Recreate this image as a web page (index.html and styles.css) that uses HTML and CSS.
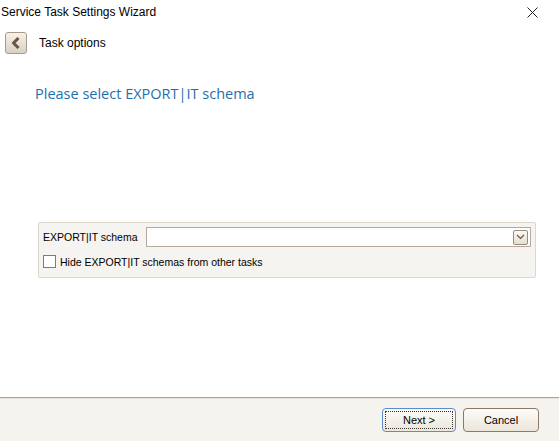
FILE: index.html
```html
<!DOCTYPE html>
<html lang="en">
<head>
  <meta charset="UTF-8" />
  <title>Service Task Settings Wizard</title>
  <link rel="stylesheet" href="styles.css">
</head>
<body>
  <div class="window">
    <div class="titlebar">
      <span class="title">Service Task Settings Wizard</span>
      <svg class="close" width="11" height="11" viewBox="0 0 11 11"><path d="M0.5 0.5 L10.5 10.5 M10.5 0.5 L0.5 10.5" stroke="#222" stroke-width="1"/></svg>
    </div>
    <div class="header">
      <button class="back" type="button">
        <svg width="10" height="12" viewBox="0 0 10 12"><path d="M7.5 1 L2.5 6 L7.5 11" fill="none" stroke="#6b5440" stroke-width="3" stroke-linejoin="round"/></svg>
      </button>
      <span class="step">Task options</span>
    </div>
    <div class="content">
      <h1 class="prompt">Please select EXPORT|IT schema</h1>
      <div class="group">
        <div class="row">
          <label class="label">EXPORT|IT schema</label>
          <div class="combo">
            <span class="drop">
              <svg width="9" height="6" viewBox="0 0 9 6"><path d="M1 1 L4.5 4.5 L8 1" fill="none" stroke="#6b5440" stroke-width="1.2"/></svg>
            </span>
          </div>
        </div>
        <div class="row check-row">
          <span class="checkbox"></span>
          <span class="label">Hide EXPORT|IT schemas from other tasks</span>
        </div>
      </div>
    </div>
    <div class="footer">
      <button class="btn default" type="button">Next &gt;</button>
      <button class="btn" type="button">Cancel</button>
    </div>
  </div>
</body>
</html>
```

FILE: styles.css
```css
html, body { margin: 0; padding: 0; background: #fff; }
body { font-family: "Liberation Sans", Arial, sans-serif; font-size: 11px; color: #000; }
.window { width: 559px; height: 441px; display: flex; flex-direction: column; }

.titlebar { height: 24px; display: flex; align-items: center; justify-content: space-between; padding: 0 21px 0 1px; }
.title { font-size: 12px; }
.close { display: block; }

.header { display: flex; align-items: center; gap: 12px; padding: 8px 0 0 5px; }
.back { width: 22px; height: 22px; padding: 0; border: 1px solid #a8998a; border-radius: 3px; background: linear-gradient(#f6f2ea, #d9d0c2); display: flex; align-items: center; justify-content: center; }
.step { font-size: 12px; }

.content { flex: 1; padding: 0 23px 0 35px; }
.prompt { margin: 30px 0 0 0; font-family: "Open Sans", sans-serif; font-weight: normal; font-size: 14.5px; color: #1e6fae; }

.group { margin: 119px 0 0 3px; background: #f5f4f0; border: 1px solid #ddd7cd; border-radius: 2px; padding: 4px 4px 9px 4px; }
.row { display: flex; align-items: center; }
.label { font-size: 10.5px; }
.row .label { width: 103px; }
.check-row .label { width: auto; }
.combo { flex: 1; height: 18px; background: #fff; border: 1px solid #b5a99b; display: flex; justify-content: flex-end; align-items: center; padding-right: 2px; }
.drop { width: 13px; height: 13px; border: 1px solid #9c8b7a; border-radius: 2px; background: linear-gradient(#fbf9f4, #e6ded1); display: flex; align-items: center; justify-content: center; }
.check-row { margin-top: 8px; gap: 4px; }
.checkbox { width: 11px; height: 11px; border: 1px solid #8b7866; background: #fff; }

.footer { height: 43px; border-top: 1px solid #b0a394; box-shadow: inset 0 1px 0 #e8e2da; background: #f4f3ee; display: flex; justify-content: flex-end; align-items: center; gap: 7px; padding-right: 20px; }
.btn { width: 76px; height: 24px; border: 1px solid #8a7a6a; border-radius: 4px; background: linear-gradient(#fdfcf9, #ece6da); font-family: "Liberation Sans", Arial, sans-serif; font-size: 11px; color: #000; }
.btn.default { width: 74px; border-color: #5c8bc8; outline: 1px dotted #333; outline-offset: -4px; }
```
